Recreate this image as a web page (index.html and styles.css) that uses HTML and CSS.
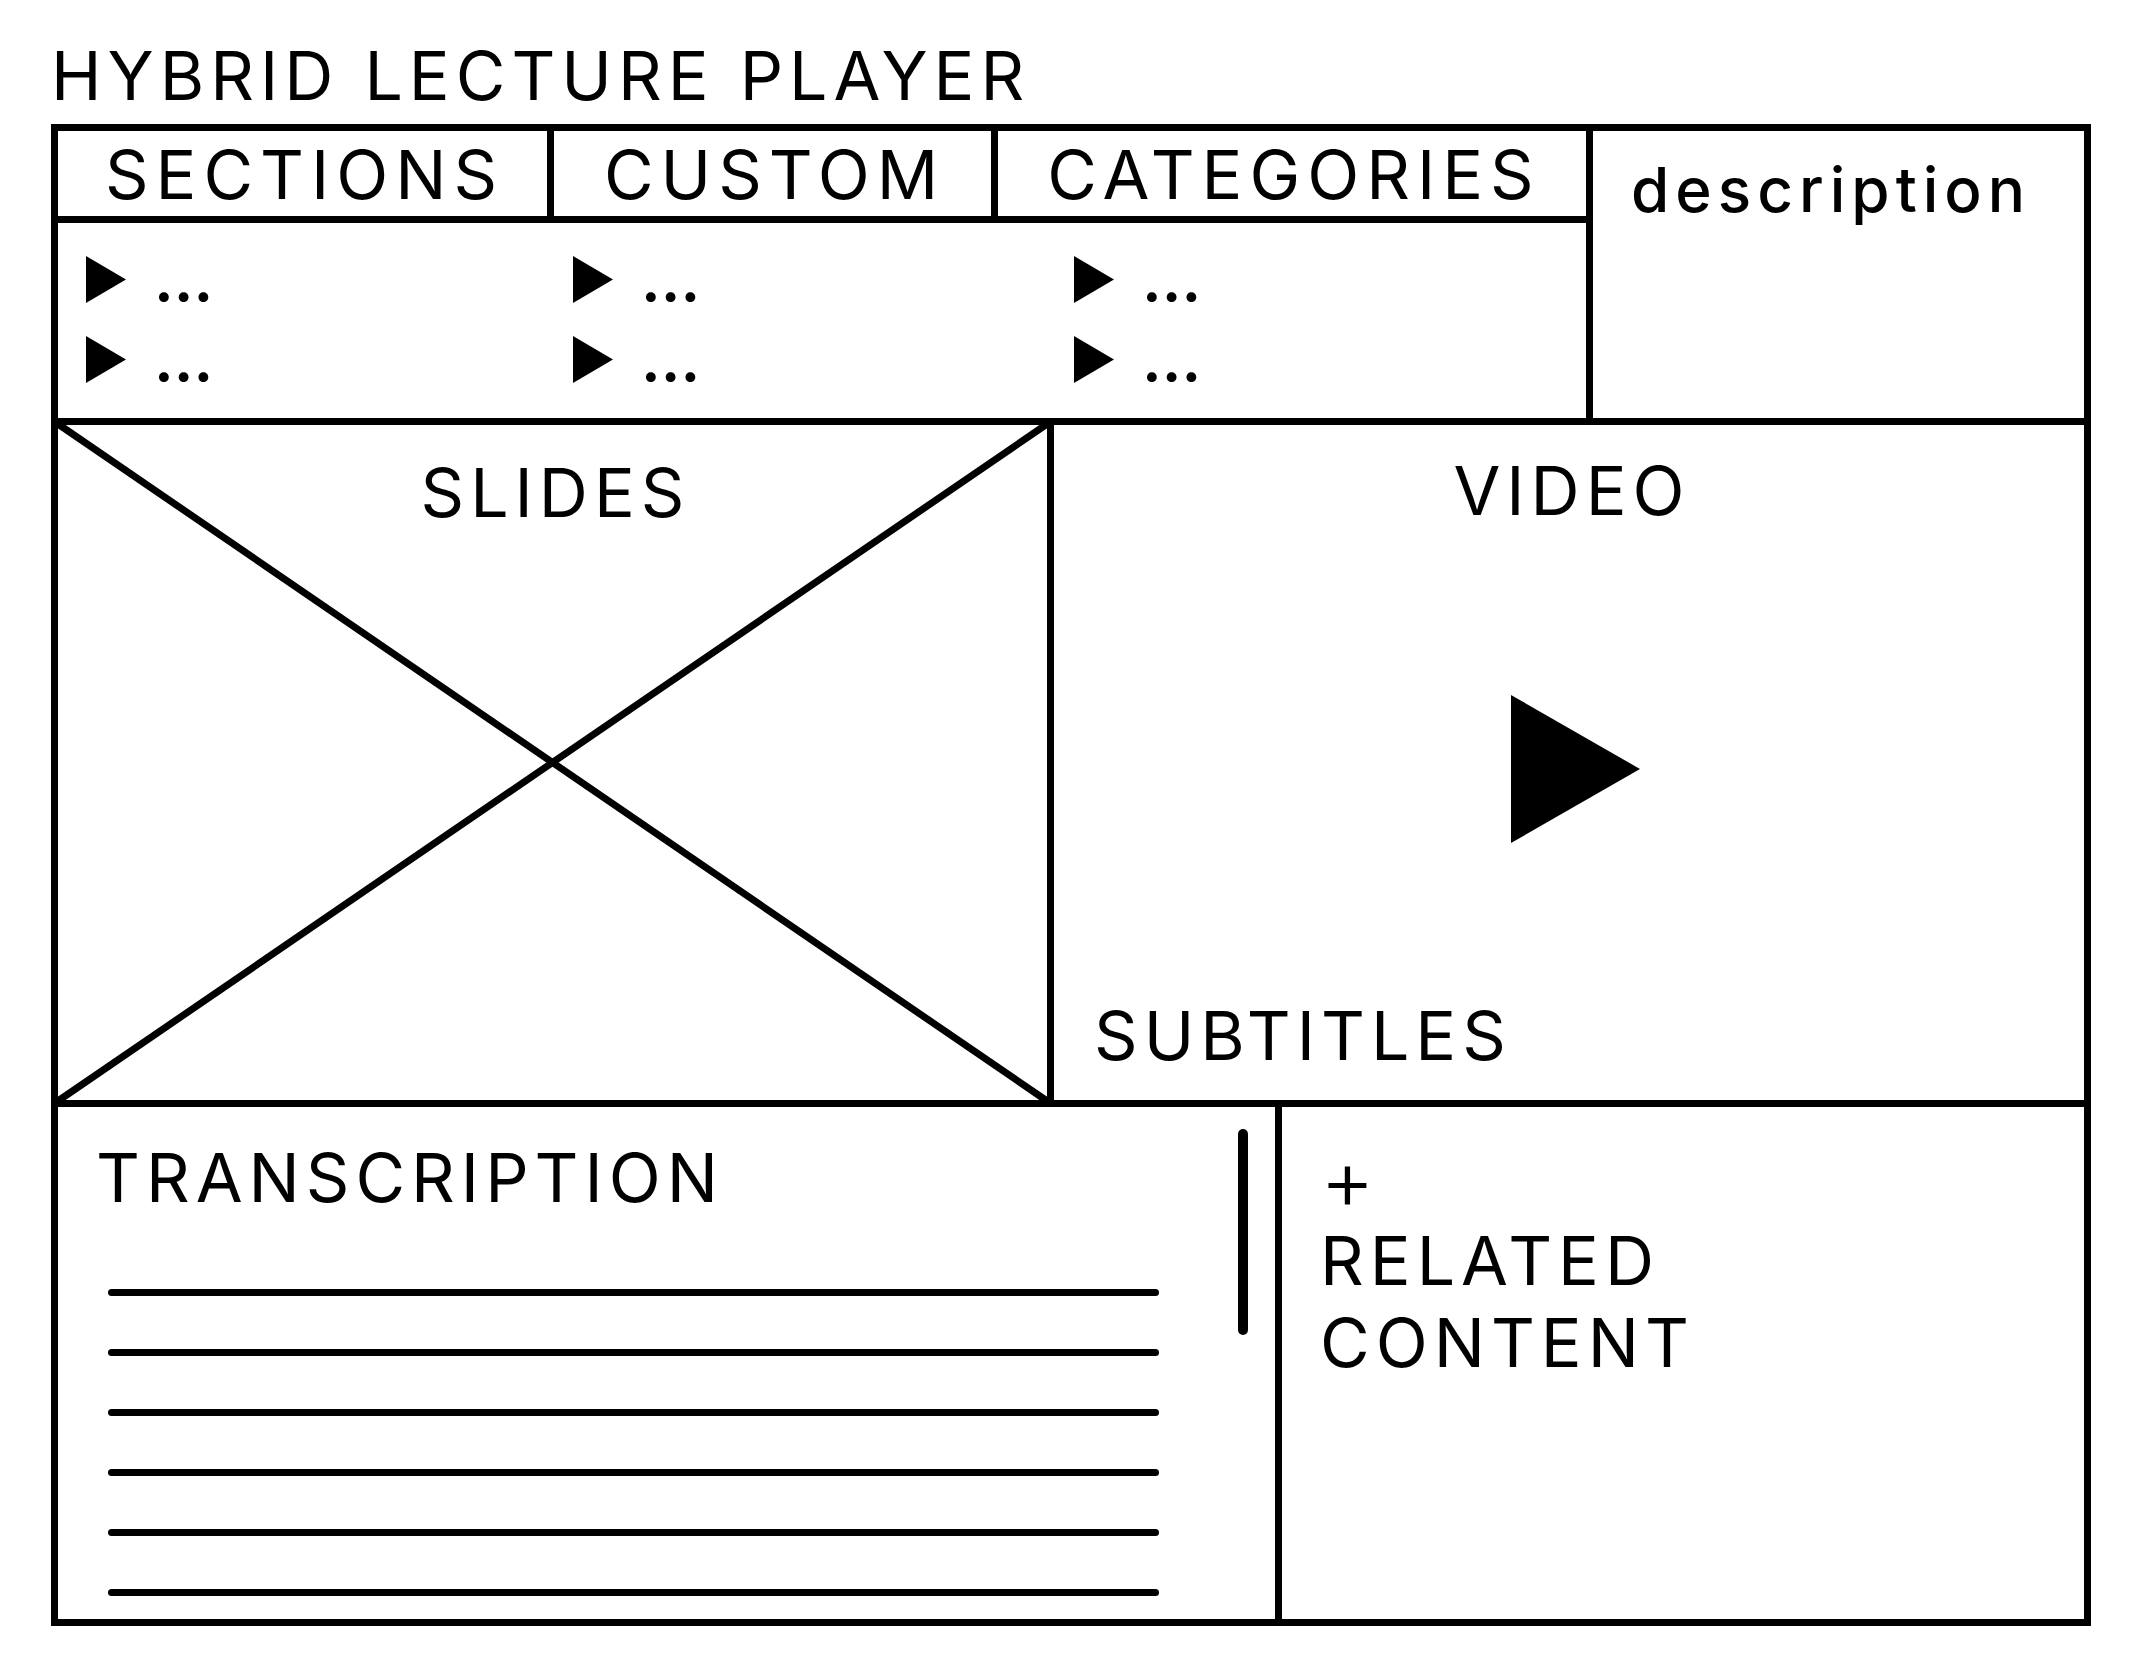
FILE: index.html
```html
<!DOCTYPE html>
<html lang="en">
<head>
<meta charset="utf-8">
<meta name="viewport" content="width=device-width, initial-scale=1">
<title>Hybrid Lecture Player</title>
<link rel="stylesheet" href="styles.css">
</head>
<body>
<h1 class="title">HYBRID LECTURE PLAYER</h1>
<main class="player">
  <header class="top">
    <nav class="browse">
      <div class="tabs">
        <button class="tab" type="button">SECTIONS</button>
        <button class="tab" type="button">CUSTOM</button>
        <button class="tab" type="button">CATEGORIES</button>
      </div>
      <div class="lists">
        <ul class="list">
          <li><button class="entry" type="button"><svg class="marker" viewBox="0 0 40 47" aria-hidden="true"><path d="M0 0L40 23.500L0 47Z"/></svg><span>...</span></button></li>
          <li><button class="entry" type="button"><svg class="marker" viewBox="0 0 40 47" aria-hidden="true"><path d="M0 0L40 23.500L0 47Z"/></svg><span>...</span></button></li>
        </ul>
        <ul class="list">
          <li><button class="entry" type="button"><svg class="marker" viewBox="0 0 40 47" aria-hidden="true"><path d="M0 0L40 23.500L0 47Z"/></svg><span>...</span></button></li>
          <li><button class="entry" type="button"><svg class="marker" viewBox="0 0 40 47" aria-hidden="true"><path d="M0 0L40 23.500L0 47Z"/></svg><span>...</span></button></li>
        </ul>
        <ul class="list">
          <li><button class="entry" type="button"><svg class="marker" viewBox="0 0 40 47" aria-hidden="true"><path d="M0 0L40 23.500L0 47Z"/></svg><span>...</span></button></li>
          <li><button class="entry" type="button"><svg class="marker" viewBox="0 0 40 47" aria-hidden="true"><path d="M0 0L40 23.500L0 47Z"/></svg><span>...</span></button></li>
        </ul>
      </div>
    </nav>
    <p class="description">description</p>
  </header>

  <div class="stage">
    <section class="slides">
      <svg class="cross" viewBox="0 0 100 100" preserveAspectRatio="none" aria-hidden="true">
        <path d="M0 0L100 100M0 100L100 0"/>
      </svg>
      <h2 class="heading">SLIDES</h2>
    </section>
    <section class="video">
      <h2 class="heading">VIDEO</h2>
      <div class="screen">
        <button class="play" type="button" aria-label="Play">
          <svg viewBox="0 0 129 148" aria-hidden="true"><path d="M0 0L129 74L0 148Z"/></svg>
        </button>
      </div>
      <p class="subtitles">SUBTITLES</p>
    </section>
  </div>

  <div class="bottom">
    <section class="transcription">
      <div class="transcript">
        <h2 class="heading">TRANSCRIPTION</h2>
        <div class="lines">
          <hr><hr><hr><hr><hr><hr>
        </div>
      </div>
      <div class="scrollbar"></div>
    </section>
    <section class="related">
      <button class="more" type="button"><span class="plus">+</span>RELATED<br>CONTENT</button>
    </section>
  </div>
</main>
</body>
</html>
```
FILE: styles.css
```css
:root {
  --ink: #000;
  --line: 7px;
  --inset: 38px;
}

* {
  box-sizing: border-box;
}

body {
  display: flex;
  flex-direction: column;
  min-height: 100vh;
  margin: 0;
  padding: 33px 46px 41px 51px;
  background: #fff;
  color: var(--ink);
  font-family: Inter, "Liberation Sans", sans-serif;
  font-size: 68px;
  line-height: 84px;
  letter-spacing: 6px;
}

h1,
h2,
p,
ul {
  margin: 0;
  padding: 0;
  font-size: inherit;
  font-weight: 400;
}

ul {
  list-style: none;
}

button {
  padding: 0;
  border: 0;
  background: none;
  color: inherit;
  font: inherit;
  letter-spacing: inherit;
  cursor: pointer;
}

svg {
  display: block;
  fill: var(--ink);
}

.title {
  margin-bottom: 7px;
}

.player {
  display: flex;
  flex: 1;
  flex-direction: column;
  border: var(--line) solid var(--ink);
}

/* Browse lists and description */

.top {
  display: grid;
  grid-template-columns: 1528fr 498fr;
  border-bottom: var(--line) solid var(--ink);
}

.tabs {
  display: grid;
  grid-template-columns: 489fr 444fr 595fr;
  border-bottom: var(--line) solid var(--ink);
}

.tab {
  height: 85px;
  padding-left: 4px;
  letter-spacing: 7px;
}

.tab + .tab {
  border-left: var(--line) solid var(--ink);
}

.lists {
  display: grid;
  grid-template-columns: 487fr 501fr 512fr;
  padding: 16px 0 19px 28px;
}

.entry {
  display: flex;
  align-items: center;
  gap: 28px;
  height: 80px;
  font-size: 62px;
  font-weight: 600;
  letter-spacing: normal;
}

.marker {
  width: 40px;
  height: 47px;
}

.description {
  padding: 17px var(--inset);
  border-left: var(--line) solid var(--ink);
  font-size: 62px;
  font-weight: 500;
}

/* Slides and video */

.stage {
  display: grid;
  flex: 1;
  grid-template-columns: 989fr 1037fr;
  min-height: 480px;
  border-bottom: var(--line) solid var(--ink);
}

.slides {
  position: relative;
  padding: 25px 0 0 6px;
  text-align: center;
}

.cross {
  position: absolute;
  top: -3px;
  left: -3px;
  width: calc(100% + 6px);
  height: calc(100% + 6px);
  overflow: visible;
  fill: none;
  stroke: var(--ink);
  stroke-width: 7px;
}

.cross path {
  vector-effect: non-scaling-stroke;
}

.video {
  display: flex;
  flex-direction: column;
  padding: 23px 0 23px 6px;
  border-left: var(--line) solid var(--ink);
  text-align: center;
}

.screen {
  display: flex;
  flex: 1;
  align-items: center;
  justify-content: center;
  padding: 12px 0 0 6px;
}

.play svg {
  width: 129px;
  height: 148px;
}

.subtitles {
  padding-left: 34px;
  text-align: left;
}

/* Transcription and related content */

.bottom {
  display: grid;
  grid-template-columns: 1217fr 809fr;
}

.transcription {
  display: flex;
  gap: 79px;
  padding: 0 27px 0 var(--inset);
}

.transcript {
  flex: 1;
  padding: 28px 0 23px;
}

.lines {
  display: grid;
  gap: 53px;
  margin: 70px 0 0 12px;
}

.lines hr {
  width: 100%;
  height: var(--line);
  margin: 0;
  border: 0;
  border-radius: 4px;
  background: var(--ink);
}

.scrollbar {
  width: 10px;
  height: 206px;
  margin-top: 22px;
  border-radius: 5px;
  background: var(--ink);
}

.related {
  padding: 32px var(--inset);
  border-left: var(--line) solid var(--ink);
}

.more {
  line-height: 82px;
  text-align: left;
}

.plus {
  display: block;
  font-size: 84px;
  font-weight: 300;
  line-height: 80px;
}
```
